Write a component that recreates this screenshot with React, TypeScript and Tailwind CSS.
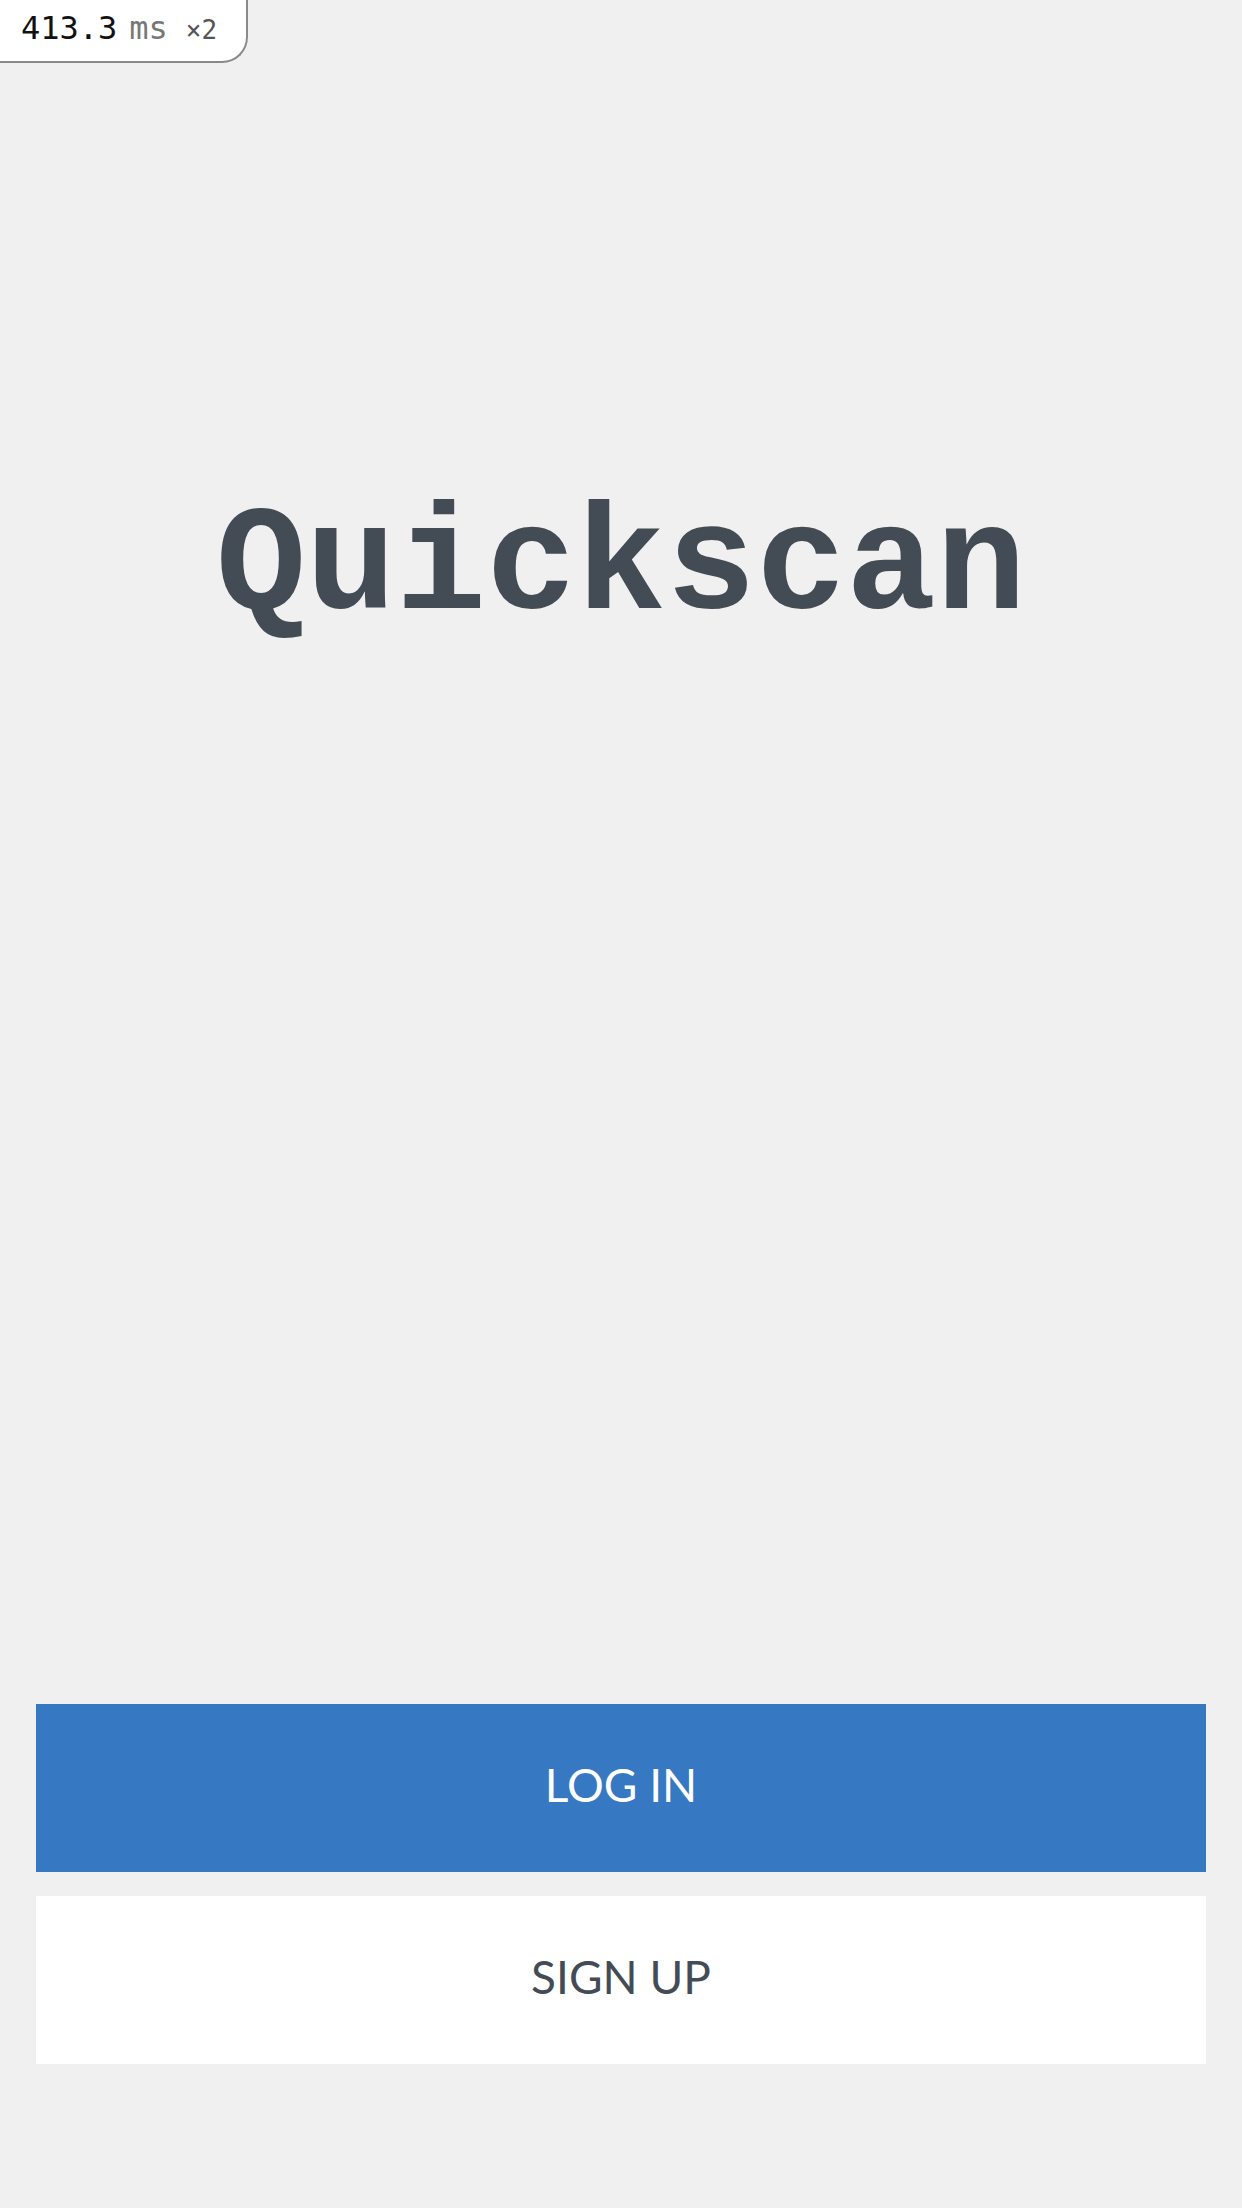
export default function App() {
  return (
    <div className="relative flex min-h-[2208px] w-full flex-col bg-[#f0f0f0]">
      <div className="absolute left-0 top-0 flex h-[63px] w-[248px] items-baseline rounded-br-[26px] border-b-2 border-r-2 border-[#8a8a8a] bg-white pl-[21px] pt-[12px] font-['DejaVu_Sans_Mono',monospace]">
        <span className="text-[32px] leading-none text-[#111]">413.3</span>
        <span className="ml-[12px] text-[32px] leading-none text-[#777]">ms</span>
        <span className="ml-[18px] text-[26px] leading-none text-[#555]">×2</span>
      </div>
      <h1 className="mt-[493px] text-center font-['Liberation_Mono','Courier_New',monospace] text-[150px] font-bold leading-none text-[#434b55]">
        Quickscan
      </h1>
      <div className="flex-1" />
      <div className="flex flex-col gap-[24px] px-[36px] pb-[144px]">
        <button className="flex h-[168px] w-full items-center justify-center bg-[#3678c2] pb-[8px] font-['Lato',sans-serif] text-[46px] text-white">
          LOG IN
        </button>
        <button className="flex h-[168px] w-full items-center justify-center bg-white pb-[8px] font-['Lato',sans-serif] text-[46px] text-[#434b55]">
          SIGN UP
        </button>
      </div>
    </div>
  );
}
